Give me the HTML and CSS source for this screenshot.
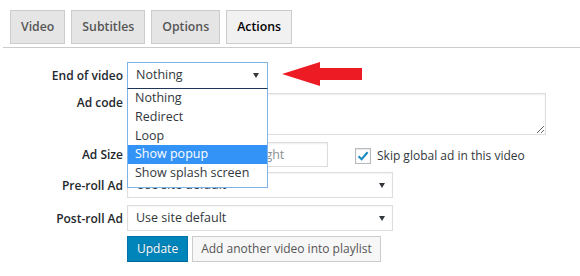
FILE: index.html
```html
<!DOCTYPE html>
<html lang="en">
<head>
<meta charset="utf-8">
<title>Video settings - Actions</title>
<link rel="stylesheet" href="styles.css">
</head>
<body>
<nav class="tabs">
  <span class="tab">Video</span>
  <span class="tab">Subtitles</span>
  <span class="tab">Options</span>
  <span class="tab tab-active">Actions</span>
</nav>

<form class="form">
  <div class="row row-end">
    <label class="label">End of video</label>
    <div class="select-wrap">
      <div class="select select-focus">Nothing<span class="caret"></span></div>
      <ul class="dropdown">
        <li class="option">Nothing</li>
        <li class="option">Redirect</li>
        <li class="option">Loop</li>
        <li class="option option-hl">Show popup</li>
        <li class="option">Show splash screen</li>
      </ul>
    </div>
    <svg class="arrow" width="80" height="24" viewBox="0 0 80 24" aria-hidden="true">
      <polygon points="0,12 38,0 38,6 80,6 80,18 38,18 38,24" fill="#ed1c24"/>
    </svg>
  </div>

  <div class="row row-code">
    <label class="label label-top">Ad code</label>
    <textarea class="textarea"></textarea>
  </div>

  <div class="row row-size">
    <label class="label">Ad Size</label>
    <input class="input input-w" type="text" placeholder="Width">
    <input class="input input-h" type="text" placeholder="Height">
    <span class="check"><svg width="14" height="14" viewBox="0 0 14 14" aria-hidden="true"><path d="M2.5 7.2 L5.6 10.2 L11.6 3.2" fill="none" stroke="#1e8cbe" stroke-width="2.2"/></svg></span>
    <span class="check-label">Skip global ad in this video</span>
  </div>

  <div class="row row-pre">
    <label class="label">Pre-roll Ad</label>
    <div class="select select-wide">Use site default<span class="caret"></span></div>
  </div>

  <div class="row row-post">
    <label class="label">Post-roll Ad</label>
    <div class="select select-wide">Use site default<span class="caret"></span></div>
  </div>

  <div class="row row-btns">
    <span class="label"></span>
    <button type="button" class="btn btn-primary">Update</button>
    <button type="button" class="btn btn-secondary">Add another video into playlist</button>
  </div>
</form>
</body>
</html>
```

FILE: styles.css
```css
* { box-sizing: border-box; }

body {
  margin: 0;
  background: #fff;
  font-family: "Open Sans", "Noto Sans", sans-serif;
  color: #23282d;
}

.tabs {
  display: flex;
  gap: 6px;
  margin: 0 0 0 3px;
  padding: 10px 0 3px 7px;
  border-bottom: 1px solid #ccc;
}

.tab {
  display: block;
  padding: 4px 10px;
  line-height: 24px;
  font-size: 12.3px;
  font-weight: 600;
  color: #555;
  background: #e5e5e5;
  border: 1px solid #ccc;
}

.tab-active {
  background: #f1f1f1;
  color: #000;
}

.form {
  margin: 0;
  padding-top: 14px;
}

.row {
  display: flex;
  align-items: center;
}

.row-code { margin-top: 5px; align-items: flex-start; }
.row-size { margin-top: 7px; }
.row-pre { margin-top: 5px; }
.row-post { margin-top: 7px; }
.row-btns { margin-top: 5px; }

.label {
  flex: 0 0 127px;
  padding-right: 4px;
  text-align: right;
  font-size: 12px;
  font-weight: 600;
  color: #23282d;
}

.label-top { padding-top: 1px; }

.select-wrap {
  position: relative;
  z-index: 2;
}

.select {
  position: relative;
  height: 26px;
  line-height: 24px;
  padding: 0 8px;
  font-size: 12.5px;
  color: #32373c;
  background: #fff;
  border: 1px solid #ddd;
  box-shadow: inset 0 1px 2px rgba(0,0,0,.05);
}

.select-focus {
  width: 141px;
  border-color: #7eb4ea;
  border-bottom: none;
  box-shadow: none;
}

.select-wide { width: 266px; }

.caret {
  position: absolute;
  right: 7px;
  top: 10px;
  width: 0;
  height: 0;
  border-left: 3.5px solid transparent;
  border-right: 3.5px solid transparent;
  border-top: 5px solid #32373c;
}

.select-focus .caret { right: 8px; }

.dropdown {
  position: absolute;
  top: 26px;
  left: 0;
  width: 141px;
  margin: 0;
  padding: 0 0 4px;
  list-style: none;
  background: #fff;
  border: 1px solid #7eb4ea;
  border-top: 1px solid #1f3559;
}

.option {
  line-height: 18.8px;
  padding-left: 7px;
  font-size: 12.5px;
  color: #32373c;
  white-space: nowrap;
}

.option-hl {
  background: #3393f7;
  color: #fff;
}

.arrow {
  display: block;
  margin-left: 14px;
  margin-top: -2px;
}

.textarea {
  display: block;
  width: 419px;
  height: 42px;
  margin: 0;
  border: 1px solid #ddd;
  box-shadow: inset 0 1px 2px rgba(0,0,0,.07);
  font-family: inherit;
  font-size: 12.5px;
  resize: both;
}

.input {
  display: block;
  height: 25px;
  margin: 0;
  padding: 0 8px;
  border: 1px solid #ddd;
  box-shadow: inset 0 1px 2px rgba(0,0,0,.07);
  font-family: inherit;
  font-size: 12.5px;
  color: #32373c;
}

.input::placeholder { color: #8a8f94; }

.input-w { width: 105px; }
.input-h { width: 91px; margin-left: 5px; }

.check {
  display: flex;
  align-items: center;
  justify-content: center;
  width: 16px;
  height: 16px;
  margin-left: 27px;
  margin-top: 3px;
  border: 1px solid #b4b9be;
  background: #fff;
  box-shadow: inset 0 1px 2px rgba(0,0,0,.1);
}

.check-label {
  margin-left: 6px;
  margin-top: 2px;
  font-size: 12px;
  color: #32373c;
}

.btn {
  display: block;
  height: 26px;
  line-height: 24px;
  margin: 0;
  padding: 0 9px;
  font-family: inherit;
  font-size: 12px;
  border-radius: 0;
  cursor: pointer;
}

.btn-primary {
  background: #0085ba;
  border: 1px solid #0073aa;
  border-bottom-color: #006799;
  box-shadow: 0 1px 0 #006799;
  color: #fff;
  text-shadow: 0 -1px 1px #006799;
}

.btn-secondary {
  margin-left: 4px;
  padding: 0 8px;
  background: #f7f7f7;
  border: 1px solid #ccc;
  box-shadow: 0 1px 0 #ccc;
  color: #555;
}
```
